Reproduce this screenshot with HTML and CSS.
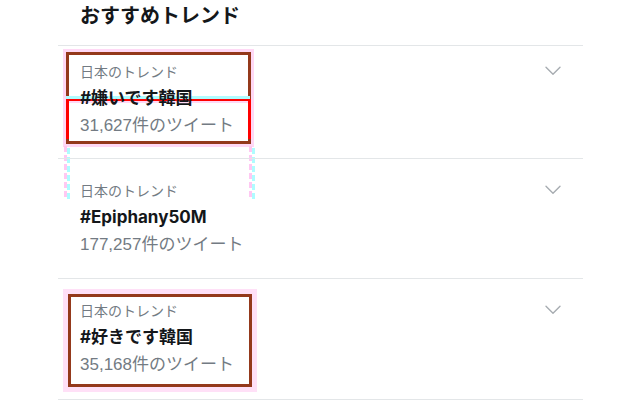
FILE: index.html
```html
<!DOCTYPE html>
<html lang="ja">
<head>
<meta charset="utf-8">
<title>おすすめトレンド</title>
<link rel="stylesheet" href="styles.css">
</head>
<body>
<div class="page">
  <h1 class="title">おすすめトレンド</h1>
  <ul class="trends">
    <li class="trend trend--first">
      <div class="info">
        <div class="label">日本のトレンド</div>
        <div class="tag">#嫌いです韓国</div>
        <div class="count">31,627件のツイート</div>
      </div>
      <svg class="chev" width="16" height="10" viewBox="0 0 16 10"><path d="M1 1.2 L8 8.2 L15 1.2" fill="none" stroke="#a7acb1" stroke-width="1.4" stroke-linecap="round" stroke-linejoin="round"/></svg>
    </li>
    <li class="trend">
      <div class="info">
        <div class="label">日本のトレンド</div>
        <div class="tag">#Epiphany50M</div>
        <div class="count">177,257件のツイート</div>
      </div>
      <svg class="chev" width="16" height="10" viewBox="0 0 16 10"><path d="M1 1.2 L8 8.2 L15 1.2" fill="none" stroke="#a7acb1" stroke-width="1.4" stroke-linecap="round" stroke-linejoin="round"/></svg>
    </li>
    <li class="trend">
      <div class="info">
        <div class="label">日本のトレンド</div>
        <div class="tag">#好きです韓国</div>
        <div class="count">35,168件のツイート</div>
      </div>
      <svg class="chev" width="16" height="10" viewBox="0 0 16 10"><path d="M1 1.2 L8 8.2 L15 1.2" fill="none" stroke="#a7acb1" stroke-width="1.4" stroke-linecap="round" stroke-linejoin="round"/></svg>
    </li>
  </ul>
</div>

<div class="annot annot-box1"></div>
<div class="annot annot-cyan"></div>
<div class="annot annot-pinkline"></div>
<div class="annot annot-red"></div>
<div class="annot annot-dash annot-dash--left"></div>
<div class="annot annot-dash annot-dash--right"></div>
<div class="annot annot-box3"></div>
</body>
</html>
```
FILE: styles.css
```css
html, body {
  margin: 0;
  padding: 0;
  background: #ffffff;
}
body {
  position: relative;
  width: 640px;
  height: 410px;
  overflow: hidden;
  font-family: "Liberation Sans", "Noto Sans CJK JP", sans-serif;
  color: #14171a;
}
.page {
  position: relative;
  z-index: 2;
  margin-left: 58px;
  width: 525px;
}
.title {
  margin: 0;
  box-sizing: border-box;
  height: 46px;
  padding: 2px 0 0 22px;
  font-size: 20px;
  line-height: 28px;
  font-weight: bold;
  border-bottom: 1px solid #e3e6e8;
}
.trends {
  list-style: none;
  margin: 0;
  padding: 0;
}
.trend {
  display: flex;
  justify-content: space-between;
  align-items: flex-start;
  padding: 22px 22px 21px 22px;
  border-bottom: 1px solid #e3e6e8;
}
.trend--first {
  padding-top: 16px;
  padding-bottom: 20px;
}
.trend:last-child {
  padding-bottom: 22px;
}
.label {
  font-size: 14px;
  line-height: 20px;
  color: #737b83;
}
.tag {
  font-family: "Inter", "Noto Sans CJK JP", sans-serif;
  font-size: 17px;
  line-height: 32px;
  font-weight: bold;
  color: #14171a;
}
.count {
  font-size: 17px;
  line-height: 24px;
  color: #737b83;
}
.chev {
  display: block;
  margin-top: 4px;
}

/* annotation overlays */
.annot {
  position: absolute;
  z-index: 1;
  box-sizing: border-box;
  pointer-events: none;
}
.annot-box1 {
  left: 66px;
  top: 52px;
  width: 185px;
  height: 92px;
  border: 3px solid #94391b;
  box-shadow: 0 0 0 3px #ffd8f5;
}
.annot-cyan {
  left: 66px;
  top: 96px;
  width: 184px;
  height: 3px;
  background: #aefcff;
}
.annot-pinkline {
  left: 68px;
  top: 101px;
  width: 180px;
  height: 2px;
  background: #ffd8f5;
}
.annot-red {
  left: 66px;
  top: 99px;
  width: 185px;
  height: 40px;
  border: 2px solid #ff0000;
  border-bottom: none;
  border-right-width: 3px;
  border-left-width: 3px;
}
.annot-dash {
  top: 146px;
  height: 54px;
  width: 6px;
  background:
    repeating-linear-gradient(to bottom, #ffc8f2 0 6px, transparent 6px 9px) left / 3px 100% no-repeat,
    repeating-linear-gradient(to bottom, transparent 0 2px, #aefcff 2px 8px, transparent 8px 9px) right / 3px 100% no-repeat;
}
.annot-dash--left {
  left: 64px;
}
.annot-dash--right {
  left: 249px;
}
.annot-box3 {
  left: 68px;
  top: 294px;
  width: 184px;
  height: 93px;
  border: 3px solid #94391b;
  box-shadow: 0 0 0 5px #ffe0f7;
}
```
